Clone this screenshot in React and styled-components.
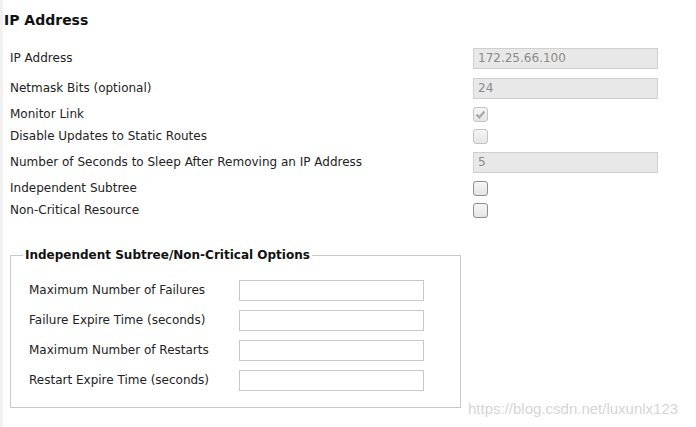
import React from "react";
import styled, { createGlobalStyle } from "styled-components";

const Global = createGlobalStyle`
  html, body { margin: 0; padding: 0; background: #fff; }
  body { font-family: "DejaVu Sans", sans-serif; color: #222; }
`;

const Page = styled.div`
  position: relative;
  width: 696px;
  height: 427px;
  box-sizing: border-box;
  border-left: 3px solid #f1f1f1;
  padding: 11px 0 0 1px;
  overflow: hidden;
`;

const Heading = styled.h2`
  margin: 0;
  font-size: 14px;
  font-weight: bold;
  line-height: 18px;
  color: #111;
`;

const Form = styled.div`
  display: grid;
  grid-template-columns: 463px 185px;
  margin: 14px 0 0 6px;
`;

const Label = styled.div`
  font-size: 12px;
  color: #222;
  display: flex;
  align-items: center;
  height: ${(p) => (p.$tall ? 30 : 22)}px;
`;

const Cell = styled.div`
  display: flex;
  align-items: center;
  height: ${(p) => (p.$tall ? 30 : 22)}px;
`;

const TextInput = styled.div`
  box-sizing: border-box;
  width: ${(p) => p.$w || 185}px;
  height: 21px;
  border: 1px solid ${(p) => (p.$disabled ? "#cfcfcf" : "#c8c8c8")};
  background: ${(p) => (p.$disabled ? "#e8e8e8" : "#fff")};
  color: #8a8a8a;
  font-size: 12px;
  line-height: 19px;
  padding-left: 4px;
`;

const Box = styled.div`
  box-sizing: border-box;
  width: 15px;
  height: 15px;
  border: 1px solid ${(p) => (p.$disabled ? "#c4c4c4" : "#8e8e8e")};
  border-radius: 3px;
  background: linear-gradient(#f6f6f6, #e4e4e4);
  display: flex;
  align-items: center;
  justify-content: center;
`;

const Fieldset = styled.fieldset`
  box-sizing: border-box;
  width: 451px;
  margin: 27px 0 0 6px;
  padding: 13px 0 12px 0;
  border: 1px solid #c8c8c8;
  min-width: 0;
`;

const Legend = styled.legend`
  font-size: 12px;
  font-weight: bold;
  color: #111;
  padding: 0 2px;
  margin-left: 12px;
`;

const SubForm = styled.div`
  display: grid;
  grid-template-columns: 210px 185px;
  margin-left: 18px;
`;

const Watermark = styled.div`
  position: absolute;
  left: 465px;
  top: 400px;
  font-family: "Liberation Sans", Arial, sans-serif;
  font-size: 15px;
  color: rgba(205, 205, 205, 0.85);
  white-space: nowrap;
`;

const Check = () => (
  <svg width="11" height="11" viewBox="0 0 11 11">
    <path d="M1.5 5.5 L4.3 8.3 L9.5 2.5" fill="none" stroke="#a8a8a8" strokeWidth="2.2" />
  </svg>
);

const rows = [
  { label: "IP Address", kind: "input", value: "172.25.66.100" },
  { label: "Netmask Bits (optional)", kind: "input", value: "24" },
  { label: "Monitor Link", kind: "check", checked: true, disabled: true },
  { label: "Disable Updates to Static Routes", kind: "check", disabled: true },
  { label: "Number of Seconds to Sleep After Removing an IP Address", kind: "input", value: "5" },
  { label: "Independent Subtree", kind: "check" },
  { label: "Non-Critical Resource", kind: "check" },
];

const subRows = [
  "Maximum Number of Failures",
  "Failure Expire Time (seconds)",
  "Maximum Number of Restarts",
  "Restart Expire Time (seconds)",
];

export default function App() {
  return (
    <>
      <Global />
      <Page>
        <Heading>IP Address</Heading>
        <Form>
          {rows.map((r) => {
            const tall = r.kind === "input";
            return (
              <React.Fragment key={r.label}>
                <Label $tall={tall}>{r.label}</Label>
                <Cell $tall={tall}>
                  {tall ? (
                    <TextInput $disabled>{r.value}</TextInput>
                  ) : (
                    <Box $disabled={r.disabled}>{r.checked && <Check />}</Box>
                  )}
                </Cell>
              </React.Fragment>
            );
          })}
        </Form>
        <Fieldset>
          <Legend>Independent Subtree/Non-Critical Options</Legend>
          <SubForm>
            {subRows.map((l) => (
              <React.Fragment key={l}>
                <Label $tall>{l}</Label>
                <Cell $tall>
                  <TextInput />
                </Cell>
              </React.Fragment>
            ))}
          </SubForm>
        </Fieldset>
        <Watermark>https://blog.csdn.net/luxunlx123</Watermark>
      </Page>
    </>
  );
}
